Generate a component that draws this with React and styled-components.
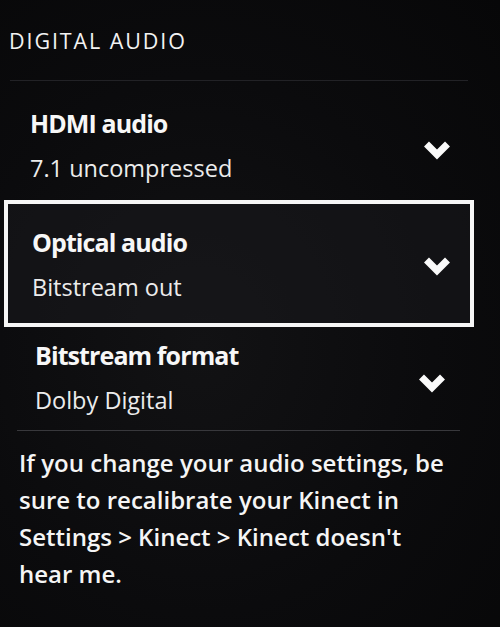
import React from "react";
import styled, { createGlobalStyle } from "styled-components";

const GlobalStyle = createGlobalStyle`
  html, body {
    margin: 0;
    background: #0a0a0b;
  }
  body {
    font-family: "Open Sans", "Noto Sans", sans-serif;
    color: #f4f4f4;
  }
`;

const Page = styled.div`
  width: 500px;
  height: 627px;
  overflow: hidden;
  background: radial-gradient(ellipse at 40% 55%, #121214 0%, #0b0b0d 55%, #070708 100%);
  padding: 27px 0 0;
  box-sizing: border-box;
`;

const SectionTitle = styled.h2`
  margin: 0 0 0 9px;
  font-size: 21.5px;
  line-height: 28px;
  font-weight: 400;
  letter-spacing: 1.9px;
  text-transform: uppercase;
  color: #f2f2f2;
`;

const Divider = styled.hr`
  border: 0;
  height: 1px;
  margin: ${props => props.$margin};
  background: ${props => props.$color};
`;

const List = styled.div`
  display: flex;
  flex-direction: column;
  margin: 0 26px 0 4px;
`;

const Row = styled.div`
  display: flex;
  align-items: flex-start;
  justify-content: space-between;
  box-sizing: border-box;
  height: ${props => props.$height}px;
  padding: ${props => props.$top}px ${props => props.$right}px 0 ${props => props.$left}px;
  border: 4px solid ${props => (props.$focused ? "#f6f6f6" : "transparent")};
  background: ${props => (props.$focused ? "rgba(26, 26, 29, 0.5)" : "transparent")};
`;

const Texts = styled.div`
  display: flex;
  flex-direction: column;
`;

const Label = styled.div`
  font-size: 25px;
  line-height: 32px;
  font-weight: 700;
  letter-spacing: -0.9px;
  color: #f7f7f7;
`;

const Value = styled.div`
  margin-top: 14px;
  font-size: 23.5px;
  line-height: 30px;
  font-weight: 400;
  color: #ececec;
`;

const ChevronWrap = styled.div`
  margin-top: ${props => props.$top}px;
  width: 28px;
  height: 22px;
  display: flex;
`;

const Note = styled.p`
  margin: 13px 0 0 19px;
  font-size: 24px;
  line-height: 37px;
  font-weight: 600;
  color: #f5f5f5;
`;

const Chevron = ({ top }) => (
  <ChevronWrap $top={top}>
    <svg width="28" height="22" viewBox="0 0 28 22">
      <polyline
        points="3.5,4 14,14.5 24.5,4"
        fill="none"
        stroke="#fafafa"
        strokeWidth="7"
        strokeLinejoin="miter"
      />
    </svg>
  </ChevronWrap>
);

const settings = [
  { label: "HDMI audio", value: "7.1 uncompressed", height: 119, top: 22, left: 22, right: 19, chev: 33 },
  { label: "Optical audio", value: "Bitstream out", height: 127, top: 22, left: 24, right: 19, chev: 30, focused: true },
  { label: "Bitstream format", value: "Dolby Digital", height: 103, top: 8, left: 27, right: 24, chev: 34 }
];

const App = () => (
  <>
    <GlobalStyle />
    <Page>
      <SectionTitle>Digital Audio</SectionTitle>
      <Divider $margin="25px 32px 0 10px" $color="#222226" />
      <List>
        {settings.map(s => (
          <Row
            key={s.label}
            $height={s.height}
            $top={s.top}
            $left={s.left}
            $right={s.right}
            $focused={s.focused}
          >
            <Texts>
              <Label>{s.label}</Label>
              <Value>{s.value}</Value>
            </Texts>
            <Chevron top={s.chev} />
          </Row>
        ))}
      </List>
      <Divider $margin="0 40px 0 17px" $color="#38383c" />
      <Note>
        If you change your audio settings, be
        <br />
        sure to recalibrate your Kinect in
        <br />
        Settings &gt; Kinect &gt; Kinect doesn't
        <br />
        hear me.
      </Note>
    </Page>
  </>
);

export default App;
